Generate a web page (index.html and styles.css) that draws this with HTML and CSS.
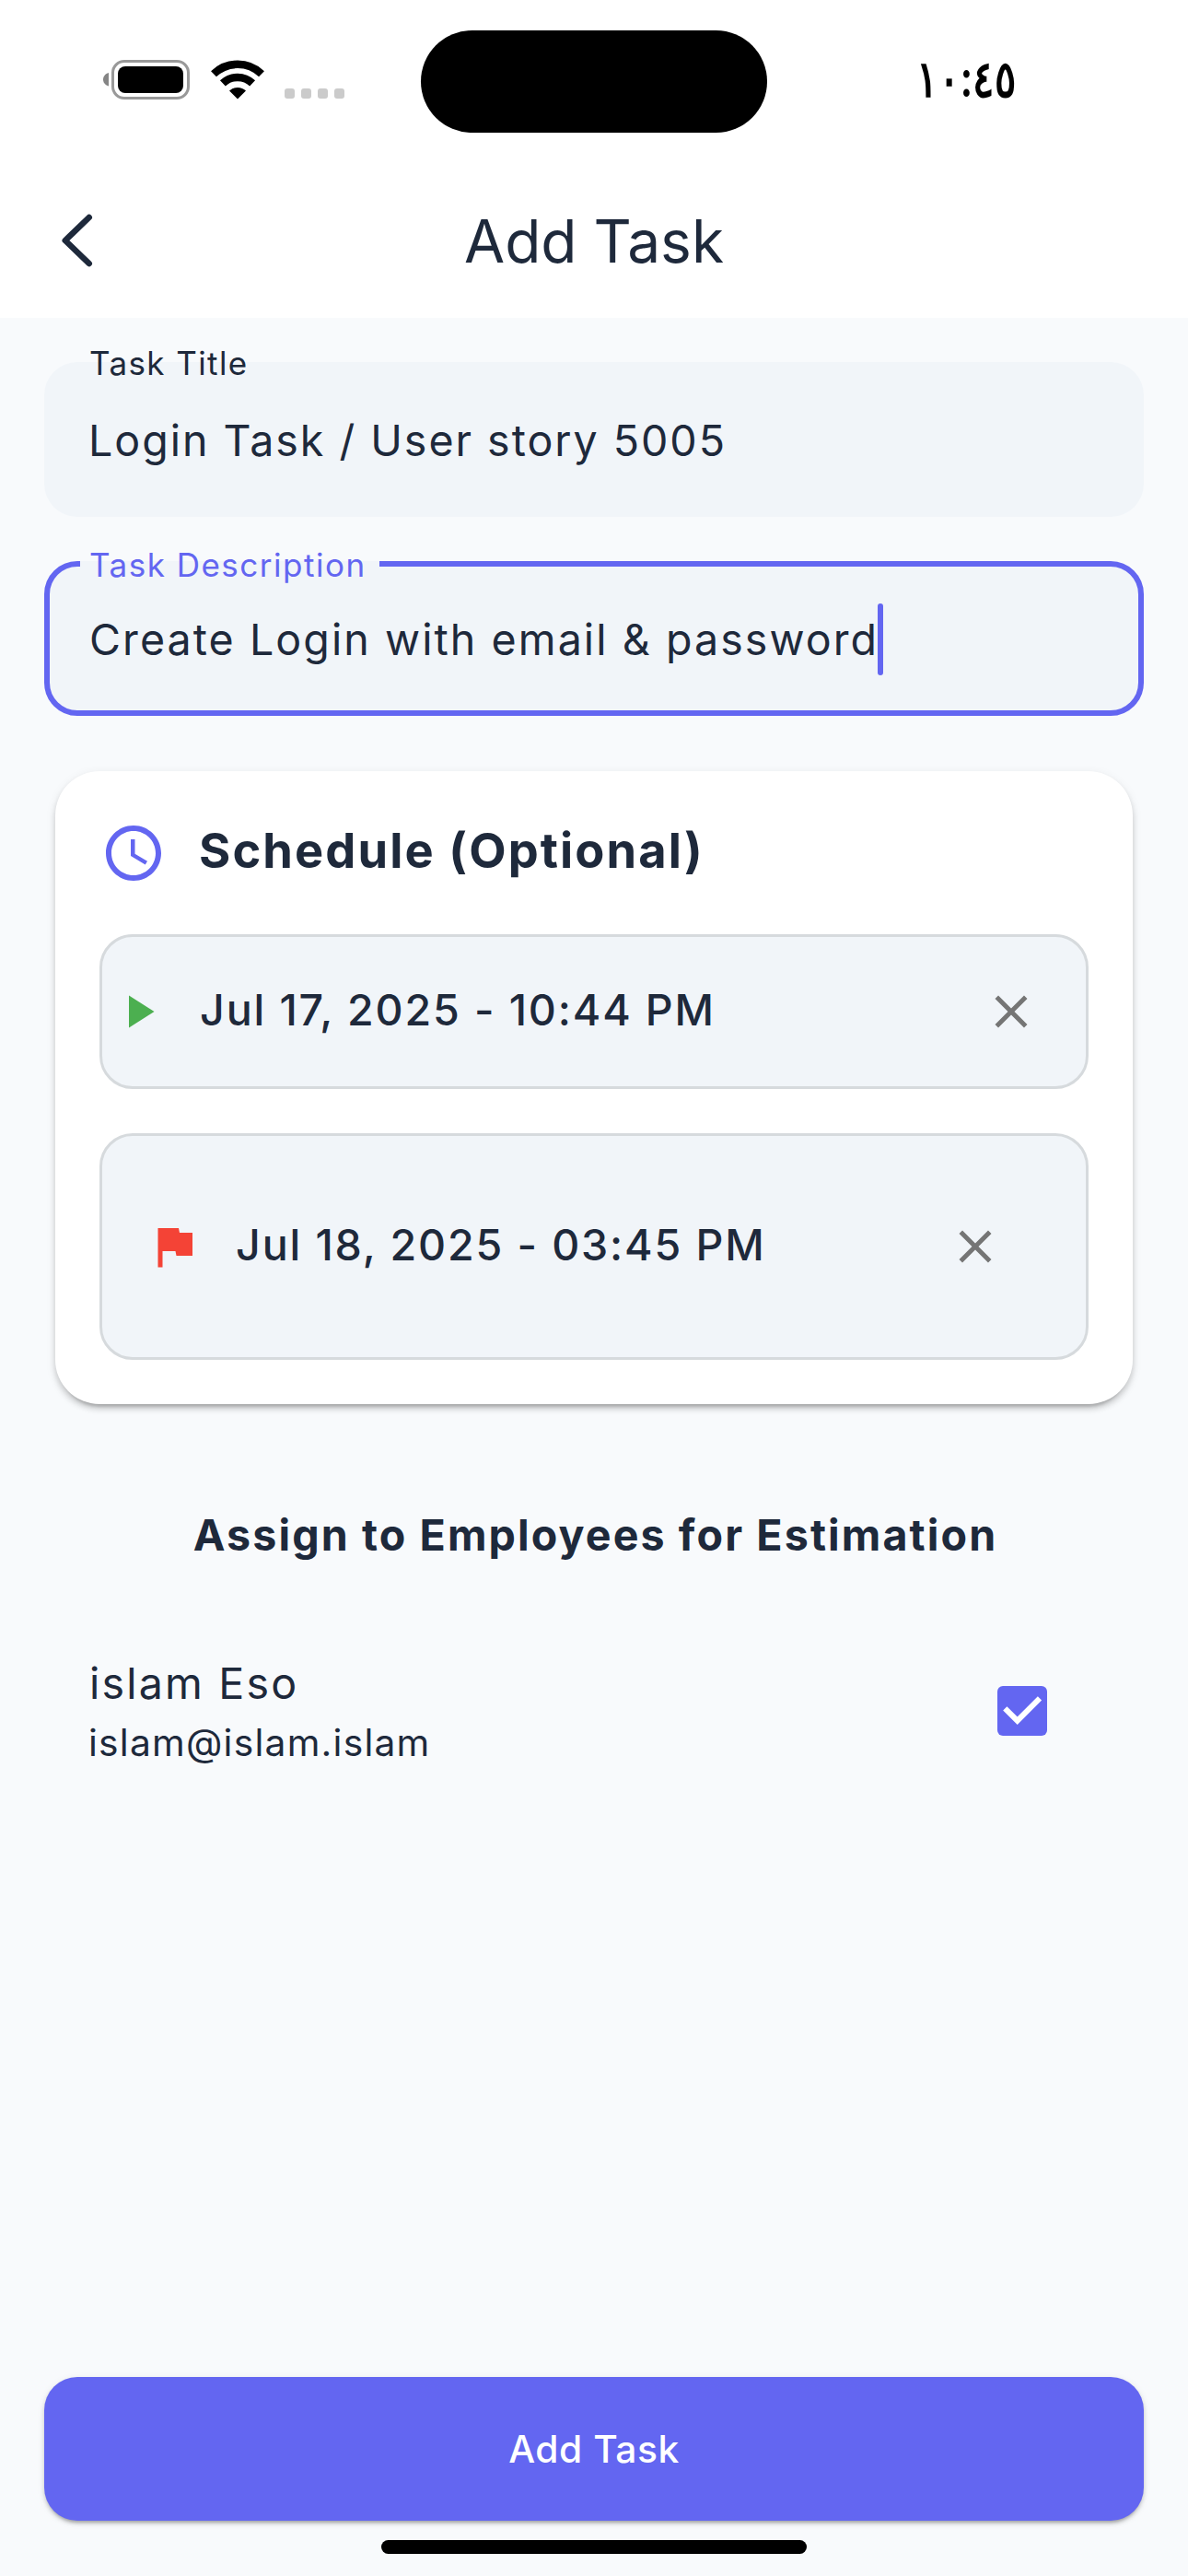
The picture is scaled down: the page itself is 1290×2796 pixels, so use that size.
FILE: index.html
```html
<!DOCTYPE html>
<html lang="en">
<head>
<meta charset="utf-8">
<title>Add Task</title>
<link rel="stylesheet" href="styles.css">
</head>
<body>
<div class="screen">
  <header class="top">
    <div class="status">
      <div class="status-icons">
        <svg class="battery" width="94" height="43" viewBox="0 0 94 43">
          <path d="M6 14v14.500C2.500 27.500 0 25 0 21.300S2.500 15 6 14z" fill="#858585"/>
          <rect x="10.500" y="1.500" width="82" height="40" rx="12.500" fill="none" stroke="#999" stroke-width="3"/>
          <rect x="16" y="7" width="71" height="29" rx="8" fill="#000"/>
        </svg>
        <svg class="wifi" width="58" height="43" viewBox="0 0 58 43">
          <g fill="none" stroke="#000">
            <path d="M3 15.300A37.500 37.500 0 0 1 55 15.300" stroke-width="8.500"/>
            <path d="M12.900 25.400A23.200 23.200 0 0 1 45.100 25.400" stroke-width="8.500"/>
          </g>
          <path d="M29 42.500l-9-9a13 13 0 0 1 18 0z" fill="#000"/>
        </svg>
        <span class="dots"><i></i><i></i><i></i><i></i></span>
      </div>
      <div class="island"></div>
      <div class="time">١٠:٤٥</div>
    </div>
    <div class="toolbar">
      <svg class="back" width="40" height="64" viewBox="0 0 40 64">
        <path d="M33.700 7L7.800 32l25.900 25" fill="none" stroke="#1e293b" stroke-width="6.600" stroke-linecap="round" stroke-linejoin="round"/>
      </svg>
      <h1>Add Task</h1>
    </div>
  </header>

  <main>
    <div class="field">
      <span class="label">Task Title</span>
      <span class="value value-title">Login Task / User story 5005</span>
    </div>
    <div class="field focused">
      <span class="label">Task Description</span>
      <span class="value value-desc">Create Login with email &amp; password</span><span class="caret"></span>
    </div>

    <section class="card">
      <div class="card-head">
        <svg class="clock" width="72" height="72" viewBox="0 0 24 24" fill="#6366f1"><path d="M11.990 2C6.470 2 2 6.480 2 12s4.470 10 9.990 10C17.520 22 22 17.520 22 12S17.520 2 11.990 2zM12 20c-4.420 0-8-3.580-8-8s3.580-8 8-8 8 3.580 8 8-3.580 8-8 8zm.5-13H11v6l5.250 3.150.75-1.230-4.500-2.670z"/></svg>
        <h2>Schedule (Optional)</h2>
      </div>
      <div class="date start">
        <svg width="60" height="60" viewBox="0 0 24 24" fill="#4caf50"><path d="M8 5v14l11-7z"/></svg>
        <span class="date-text">Jul 17, 2025 - 10:44 PM</span>
        <svg width="60" height="60" viewBox="0 0 24 24" fill="#757575"><path d="M19 6.410L17.590 5 12 10.590 6.410 5 5 6.410 10.590 12 5 17.590 6.410 19 12 13.410 17.590 19 19 17.590 13.410 12z"/></svg>
      </div>
      <div class="date end">
        <svg width="60" height="60" viewBox="0 0 24 24" fill="#f44336"><path d="M14.400 6L14 4H5v17h2v-7h5.600l.4 2h7V6z"/></svg>
        <span class="date-text">Jul 18, 2025 - 03:45 PM</span>
        <svg width="60" height="60" viewBox="0 0 24 24" fill="#757575"><path d="M19 6.410L17.590 5 12 10.590 6.410 5 5 6.410 10.590 12 5 17.590 6.410 19 12 13.410 17.590 19 19 17.590 13.410 12z"/></svg>
      </div>
    </section>

    <h3>Assign to Employees for Estimation</h3>

    <div class="employee">
      <div>
        <div class="name">islam Eso</div>
        <div class="email">islam@islam.islam</div>
      </div>
      <svg class="check" width="54" height="54" viewBox="0 0 54 54">
        <rect width="54" height="54" rx="6" fill="#6366f1"/>
        <path d="M8.300 24.300L21.700 37.700 46 13.400" fill="none" stroke="#fff" stroke-width="6"/>
      </svg>
    </div>
  </main>

  <footer>
    <button type="button">Add Task</button>
    <div class="home"></div>
  </footer>
</div>
</body>
</html>
```
FILE: styles.css
```css
* {
  box-sizing: border-box;
}

body {
  margin: 0;
  background: #f8fafc;
  color: #1e293b;
  font-family: Inter, "Liberation Sans", sans-serif;
}

h1, h2, h3 {
  margin: 0;
}

svg {
  display: block;
  flex: none;
}

.screen {
  width: 1290px;
  height: 2796px;
  display: flex;
  flex-direction: column;
}

/* Status bar and toolbar */
.top {
  background: #fff;
  height: 345px;
}

.status {
  height: 177px;
  display: grid;
  grid-template-columns: 1fr 376px 1fr;
  align-items: center;
}

.status-icons {
  display: flex;
  align-items: center;
  padding: 0 0 4px 112px;
}

.wifi {
  margin-left: 23px;
}

.dots {
  display: flex;
  gap: 7px;
  margin: 30px 0 0 22px;
}

.dots i {
  width: 11px;
  height: 11px;
  border-radius: 3px;
  background: #cbcbcb;
}

.island {
  height: 111px;
  border-radius: 56px;
  background: #000;
}

.time {
  margin-left: 162px;
  padding-bottom: 7px;
  font-size: 55px;
  line-height: 66px;
  font-weight: 600;
  color: #000;
  white-space: nowrap;
  transform: scaleX(.79);
  transform-origin: left center;
}

.toolbar {
  height: 168px;
  display: grid;
  grid-template-columns: 200px 1fr 200px;
  align-items: center;
}

.back {
  margin-left: 63px;
}

h1 {
  padding-top: 1px;
  font-size: 64px;
  font-weight: 400;
  letter-spacing: 0;
  text-align: center;
}

/* Form */
main {
  padding: 48px 48px 0;
}

.field {
  position: relative;
  height: 168px;
  display: flex;
  align-items: center;
  padding: 2px 48px 0;
  border-radius: 36px;
  background: #f1f5f9;
}

.field + .field {
  margin-top: 48px;
}

.field.focused {
  padding: 2px 42px 0;
  border: 6px solid #6366f1;
}

.label {
  position: absolute;
  left: 37px;
  top: -20px;
  padding: 0 12px;
  font-size: 35px;
  line-height: 42px;
  letter-spacing: 1.4px;
  white-space: nowrap;
}

.focused .label {
  z-index: 0;
  left: 33px;
  top: -23px;
  padding: 0 14px 0 10px;
  letter-spacing: 1.5px;
  color: #6366f1;
}

.focused .label::before {
  content: "";
  position: absolute;
  z-index: -1;
  inset: 17px 0 auto;
  height: 6px;
  background: #f1f5f9;
}

.value {
  font-size: 46.56px;
  line-height: 72px;
  white-space: nowrap;
}

.value-title {
  letter-spacing: 1.98px;
}

.value-desc {
  margin-left: 1px;
  letter-spacing: 2.07px;
}

.caret {
  width: 6px;
  height: 78px;
  margin-left: -1px;
  border-radius: 3px;
  background: #6366f1;
}

/* Schedule card */
.card {
  margin: 60px 12px 0;
  height: 687px;
  padding: 48px;
  border-radius: 48px;
  background: #fff;
  box-shadow: 0 9px 3px -6px rgba(0, 0, 0, .14), 0 5px 6px rgba(0, 0, 0, .16), 0 3px 12px rgba(0, 0, 0, .08);
}

.card-head {
  height: 81px;
  display: flex;
  align-items: center;
  gap: 35px;
  padding-left: 1px;
}

h2 {
  padding-bottom: 5px;
  font-size: 52.4px;
  line-height: 60px;
  font-weight: 700;
  letter-spacing: 2.1px;
}

.date {
  display: flex;
  align-items: center;
  gap: 36px;
  margin-top: 48px;
  border: 3px solid #d6dadd;
  border-radius: 36px;
  background: #f1f5f9;
}

.start {
  height: 168px;
  padding: 0 51px 0 9px;
}

.end {
  height: 246px;
  padding: 0 90px 0 48px;
}

.date-text {
  flex: 1;
  padding: 0 0 4px 1px;
  font-size: 46.56px;
  line-height: 60px;
  font-weight: 500;
  letter-spacing: 1.87px;
  white-space: nowrap;
}

/* Employees */
h3 {
  margin-top: 106px;
  padding-left: 3px;
  font-size: 46.56px;
  line-height: 72px;
  font-weight: 700;
  letter-spacing: 2.12px;
  text-align: center;
}

.employee {
  display: flex;
  align-items: center;
  justify-content: space-between;
  margin-top: 92px;
  padding: 0 105px 0 48px;
}

.name {
  padding-left: 1px;
  font-size: 46.56px;
  line-height: 66px;
  letter-spacing: 2.2px;
}

.email {
  font-size: 40.74px;
  line-height: 64px;
  letter-spacing: 1.24px;
}

.check {
  margin-bottom: 4px;
}

/* Bottom action */
footer {
  margin-top: auto;
  padding: 0 48px 24px;
}

button {
  display: block;
  width: 100%;
  height: 156px;
  padding: 1px 0 0;
  border: 0;
  border-radius: 36px;
  background: #6366f1;
  color: #fff;
  font: 500 40.74px/60px Inter, "Liberation Sans", sans-serif;
  letter-spacing: .53px;
  box-shadow: 0 5px 3px -3px rgba(0, 0, 0, .16), 0 3px 4px rgba(0, 0, 0, .16), 0 2px 8px rgba(0, 0, 0, .08);
}

.home {
  width: 462px;
  height: 15px;
  margin: 21px auto 0;
  border-radius: 8px;
  background: #000;
}
```
